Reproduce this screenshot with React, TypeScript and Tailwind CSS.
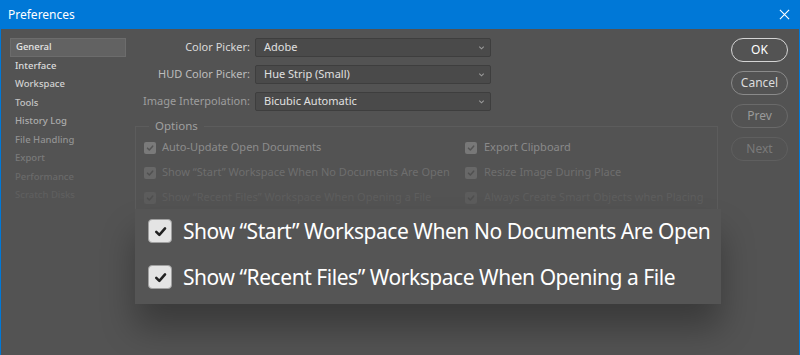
import React from 'react';

const font = { fontFamily: '"Noto Sans", "Open Sans", Arial, sans-serif' };

const sideItems: { label: string; color: string }[] = [
  { label: 'General', color: 'text-[#e6e6e6]' },
  { label: 'Interface', color: 'text-[#dcdcdc]' },
  { label: 'Workspace', color: 'text-[#d2d2d2]' },
  { label: 'Tools', color: 'text-[#c4c4c4]' },
  { label: 'History Log', color: 'text-[#acacac]' },
  { label: 'File Handling', color: 'text-[#929292]' },
  { label: 'Export', color: 'text-[#7a7a7a]' },
  { label: 'Performance', color: 'text-[#6a6a6a]' },
  { label: 'Scratch Disks', color: 'text-[#5f5f5f]' },
];

const CheckMark = ({ className }: { className?: string }) => (
  <svg viewBox="0 0 12 12" className={className} fill="none">
    <path d="M3 6.2 L5.2 8.4 L9.2 3.8" stroke="currentColor" strokeWidth="1.8" strokeLinecap="round" strokeLinejoin="round" />
  </svg>
);

const SmallCheck = ({ box, tick }: { box: string; tick: string }) => (
  <span className={`w-[12px] h-[12px] shrink-0 rounded-[2px] flex items-center justify-center ${box} ${tick}`}>
    <CheckMark className="w-[10px] h-[10px]" />
  </span>
);

const Select = ({ value, label, labelColor }: { value: string; label: string; labelColor: string }) => (
  <div className="flex items-center h-[19px]">
    <span className={`w-[120px] text-right pr-[5px] text-[11px] whitespace-nowrap ${labelColor}`}>{label}</span>
    <div className="w-[236px] h-[19px] bg-[#4a4a4a] border border-[#3e3e3e] rounded-[2px] flex items-center justify-between pl-[8px] pr-[4px]">
      <span className="text-[11px] text-[#e0e0e0]">{value}</span>
      <svg viewBox="0 0 10 10" className="w-[9px] h-[9px] text-[#9a9a9a]" fill="none">
        <path d="M2.5 4 L5 6.5 L7.5 4" stroke="currentColor" strokeWidth="1.2" />
      </svg>
    </div>
  </div>
);

const Row = ({ label, box, tick, text, gap }: { label: string; box: string; tick: string; text: string; gap: string }) => (
  <div className={`flex items-center h-[15px] ${gap}`}>
    <SmallCheck box={box} tick={tick} />
    <span className={`text-[11px] whitespace-nowrap ${text}`}>{label}</span>
  </div>
);

const PillButton = ({ label, cls }: { label: string; cls: string }) => (
  <div className={`w-[57px] h-[24px] rounded-full flex items-center justify-center text-[12px] ${cls}`}>{label}</div>
);

export default function App() {
  return (
    <div className="w-[800px] h-[355px] relative overflow-hidden bg-[#535353] border-x border-[#0078d7]" style={font}>
      {/* title bar */}
      <div className="h-[29px] bg-[#0078d7] flex items-center justify-between pl-[7px] pr-[9px]">
        <span className="text-[12px] text-white">Preferences</span>
        <svg viewBox="0 0 12 12" className="w-[11px] h-[11px] text-white" fill="none">
          <path d="M1 1 L11 11 M11 1 L1 11" stroke="currentColor" strokeWidth="1.2" />
        </svg>
      </div>

      <div className="flex pt-[9px]">
        {/* sidebar */}
        <div className="ml-[9px] w-[116px] flex flex-col">
          {sideItems.map((it, i) => (
            <div
              key={it.label}
              className={`h-[18.5px] flex items-center pl-[5px] text-[9.5px] font-medium ${it.color} ${i === 0 ? 'bg-[#626262] border border-[#6c6c6c]' : ''}`}
            >
              {it.label}
            </div>
          ))}
        </div>

        {/* main */}
        <div className="ml-[9px] w-[583px] flex flex-col">
          <div className="flex flex-col gap-[8px]">
            <Select label="Color Picker:" value="Adobe" labelColor="text-[#dadada]" />
            <Select label="HUD Color Picker:" value="Hue Strip (Small)" labelColor="text-[#bdbdbd]" />
            <Select label="Image Interpolation:" value="Bicubic Automatic" labelColor="text-[#9e9e9e]" />
          </div>
          <div className="relative mt-[15px] border border-[#5c5c5c] h-[120px]">
            <span className="absolute -top-[10px] left-[13px] px-[6px] bg-[#535353] text-[11.5px] text-[#a0a0a0]">Options</span>
            <div className="flex pt-[13px] pl-[8px]">
              <div className="w-[321px] flex flex-col gap-[10px]">
                <Row label="Auto-Update Open Documents" box="bg-[#7a7a7a]" tick="text-[#555]" text="text-[#8c8c8c]" gap="gap-[6px]" />
                <Row label="Show “Start” Workspace When No Documents Are Open" box="bg-[#686868]" tick="text-[#505050]" text="text-[#6e6e6e]" gap="gap-[6px]" />
                <Row label="Show “Recent Files” Workspace When Opening a File" box="bg-[#5c5c5c]" tick="text-[#4f4f4f]" text="text-[#5e5e5e]" gap="gap-[6px]" />
              </div>
              <div className="flex flex-col gap-[10px]">
                <Row label="Export Clipboard" box="bg-[#787878]" tick="text-[#555]" text="text-[#8a8a8a]" gap="gap-[7px]" />
                <Row label="Resize Image During Place" box="bg-[#686868]" tick="text-[#505050]" text="text-[#6e6e6e]" gap="gap-[7px]" />
                <Row label="Always Create Smart Objects when Placing" box="bg-[#5c5c5c]" tick="text-[#4f4f4f]" text="text-[#5e5e5e]" gap="gap-[7px]" />
              </div>
            </div>
          </div>
        </div>

        {/* buttons */}
        <div className="ml-[13px] flex flex-col gap-[9px]">
          <PillButton label="OK" cls="border-[1.5px] border-[#d4d4d4] text-white" />
          <PillButton label="Cancel" cls="border border-[#8a8a8a] text-[#dcdcdc]" />
          <PillButton label="Prev" cls="border border-[#6a6a6a] text-[#9a9a9a]" />
          <PillButton label="Next" cls="border border-[#5f5f5f] text-[#7a7a7a]" />
        </div>
      </div>

      {/* magnified callout */}
      <div className="absolute left-[134px] top-[209px] w-[586px] h-[95px] bg-[#555555] shadow-[0_24px_34px_0_rgba(0,0,0,0.3)] flex flex-col gap-[22px] pt-[10px] pl-[13px]">
        {[
          'Show “Start” Workspace When No Documents Are Open',
          'Show “Recent Files” Workspace When Opening a File',
        ].map((t) => (
          <div key={t} className="flex items-center gap-[11px] h-[24px]">
            <span className="w-[24px] h-[24px] rounded-[4px] bg-[#e4e4e4] border border-[#a0a0a0] flex items-center justify-center text-[#222]">
              <CheckMark className="w-[17px] h-[17px]" />
            </span>
            <span className="text-[21px] tracking-[-0.45px] text-white leading-none">{t}</span>
          </div>
        ))}
      </div>
    </div>
  );
}
